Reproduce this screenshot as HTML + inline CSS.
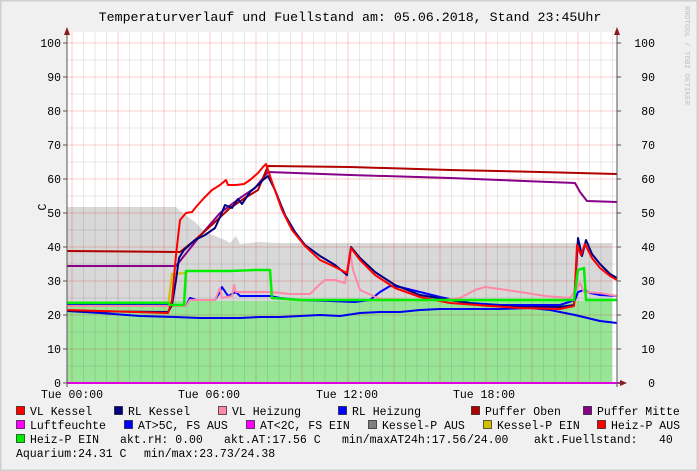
<!DOCTYPE html>
<html><head><meta charset="utf-8"><style>
html,body{margin:0;padding:0;background:#f0f0f0}
body{width:698px;height:471px;overflow:hidden;position:relative}
</style></head><body>
<svg width="698" height="471" viewBox="0 0 698 471" xmlns="http://www.w3.org/2000/svg" style="position:absolute;left:0;top:0">
<rect x="0" y="0" width="698" height="471" fill="#f0f0f0" stroke="#cfcfcf" stroke-width="3"/>
<rect x="67" y="32" width="550" height="351" fill="#ffffff"/>
<polygon fill="#d8d8d8" points="67,383 67,207 176,207 185,215 195,222 205,232 215,236 225,240 230,243 236,236 240,244 250,243 260,242 275,243 300,243 350,243 400,243 450,243 500,243 550,243 612,243 612,383"/>
<polygon fill="#98e598" points="67,383 67,301 612,301 612,383"/>
<g stroke="#000" stroke-opacity="0.09" stroke-width="1">
<path d="M83.5 32V383M95 32V383M106.5 32V383M129.5 32V383M141 32V383M152.5 32V383M175.5 32V383M187 32V383M198.5 32V383M221.5 32V383M233 32V383M244.5 32V383M267.5 32V383M279 32V383M290.5 32V383M313.5 32V383M325 32V383M336.5 32V383M359.5 32V383M371 32V383M382.5 32V383M405.5 32V383M417 32V383M428.5 32V383M451.5 32V383M463 32V383M474.5 32V383M497.5 32V383M509 32V383M520.5 32V383M543.5 32V383M555 32V383M566.5 32V383M589.5 32V383M601 32V383M612.5 32V383"/>
<path d="M67 366H617M67 332H617M67 298H617M67 264H617M67 230H617M67 196H617M67 162H617M67 128H617M67 94H617M67 60H617"/>
</g>
<g stroke="#e00000" stroke-opacity="0.2" stroke-width="1">
<path d="M72 32V383M118 32V383M164 32V383M210 32V383M256 32V383M302 32V383M348 32V383M394 32V383M440 32V383M486 32V383M532 32V383M578 32V383"/>
<path d="M67 349H617M67 315H617M67 281H617M67 247H617M67 213H617M67 179H617M67 145H617M67 111H617M67 77H617M67 43H617"/>
</g>
<g fill="none" stroke-width="2" stroke-linejoin="round">
<polyline stroke="#0000ee" points="67,311 100,313 140,316 175,317 200,318 230,318 240,318 260,317 280,317 300,316 320,315 340,316 360,313 380,312 400,312 420,310 440,309 460,309 480,309 500,309 530,308 550,310 575,315 600,321 617,323"/>
<polyline stroke="#880088" points="67,266 176,266 200,236 220,213 240,198 255,188 268,172 350,175 450,178 575,183 580,192 587,201 617,202"/>
<polyline stroke="#b00000" points="67,251 180,252 195,240 215,222 230,208 245,198 258,190 268,166 350,167 450,170 540,172 617,174"/>
<polyline stroke="#d0c000" points="67,305 168,306 170,290 172,274 186,273"/>
<polyline stroke="#0000ff" points="67,304 168,304 172,306 186,306 190,298 196,300 215,300 220,292 222,287 228,296 236,292 240,296 270,296 280,298 300,300 330,301 355,302 370,300 380,292 390,286 400,287 420,292 440,297 470,303 500,305 560,305 575,300 578,292 584,290 590,293 600,295 617,296"/>
<polyline stroke="#ff88a8" points="67,306 168,306 186,306 190,300 196,300 215,300 220,288 222,298 232,296 234,285 236,292 245,292 270,292 290,294 310,294 318,286 325,280 335,280 345,283 350,252 353,270 360,290 380,299 410,300 440,300 460,298 475,290 485,287 500,289 520,292 545,296 570,298 576,290 580,283 584,292 600,293 617,296"/>
<polyline stroke="#000080" points="67,311 168,312 172,305 176,280 179,258 184,250 195,240 205,235 215,228 220,217 225,205 232,208 238,199 242,204 250,192 258,185 263,180 268,176 275,190 285,215 295,232 305,245 320,256 335,265 347,275 351,247 360,258 375,272 395,285 420,295 450,300 480,305 520,307 560,307 574,305 578,238 582,256 586,240 592,254 600,264 610,274 617,278"/>
<polyline stroke="#ff0000" points="67,310 168,313 172,300 176,255 180,220 186,213 192,212 196,207 204,198 212,190 220,185 226,180 228,185 236,185 244,184 250,180 258,173 263,167 266,164 272,182 282,210 292,230 305,246 320,260 335,267 347,273 351,248 360,260 375,275 395,288 420,297 450,303 490,306 520,308 560,309 574,306 577,245 581,255 585,244 592,258 600,268 610,276 617,280"/>
<polyline stroke="#00ee00" stroke-width="2.5" points="67,303 168,303 170,305 184,305 186,271 230,271 255,270 270,270 272,298 300,300 400,300 500,300 574,300 578,270 584,268 586,300 617,300"/>
</g>
<path d="M67 383H623" stroke="#e000e0" stroke-width="2"/>
<path d="M67 30V387M617 30V387" stroke="#555" stroke-width="1"/>
<polygon fill="#8b1a1a" points="64,35 70,35 67,27"/>
<polygon fill="#8b1a1a" points="614,35 620,35 617,27"/>
<polygon fill="#8b1a1a" points="620,380 620,386 627,383"/>
<g stroke="#555"><path d="M63 43H67M63 77H67M63 111H67M63 145H67M63 179H67M63 213H67M63 247H67M63 281H67M63 315H67M63 349H67M63 383H67M617 43H621M617 77H621M617 111H621M617 145H621M617 179H621M617 213H621M617 247H621M617 281H621M617 315H621M617 349H621M617 383H621"/></g>
<g font-size="11.5" fill="#000" font-family="Liberation Mono, monospace">
<text x="350" y="21" text-anchor="middle" font-size="13.3">Temperaturverlauf und Fuellstand am: 05.06.2018, Stand 23:45Uhr</text>
<g text-anchor="end">
<text x="61" y="47">100</text><text x="61" y="81">90</text><text x="61" y="115">80</text><text x="61" y="149">70</text><text x="61" y="183">60</text><text x="61" y="217">50</text><text x="61" y="251">40</text><text x="61" y="285">30</text><text x="61" y="319">20</text><text x="61" y="353">10</text><text x="61" y="387">0</text>
<text x="655" y="47">100</text><text x="655" y="81">90</text><text x="655" y="115">80</text><text x="655" y="149">70</text><text x="655" y="183">60</text><text x="655" y="217">50</text><text x="655" y="251">40</text><text x="655" y="285">30</text><text x="655" y="319">20</text><text x="655" y="353">10</text><text x="655" y="387">0</text>
</g>
<g text-anchor="middle">
<text x="72" y="398">Tue 00:00</text><text x="209" y="398">Tue 06:00</text><text x="347" y="398">Tue 12:00</text><text x="484" y="398">Tue 18:00</text>
</g>
<text transform="translate(46,207) rotate(-90)" text-anchor="middle">C</text>
<text transform="translate(685,6) rotate(90)" font-size="7.5" fill="#c0c0c0">RRDTOOL / TOBI OETIKER</text>
</g>
<g stroke="#000" stroke-opacity="0.6" stroke-width="1">
<rect x="16.5" y="406.5" width="8" height="8" fill="#ff0000"/>
<rect x="114.5" y="406.5" width="8" height="8" fill="#000080"/>
<rect x="218.5" y="406.5" width="8" height="8" fill="#ff88a8"/>
<rect x="338.5" y="406.5" width="8" height="8" fill="#0000ff"/>
<rect x="471.5" y="406.5" width="8" height="8" fill="#b00000"/>
<rect x="583.5" y="406.5" width="8" height="8" fill="#880088"/>
<rect x="16.5" y="420.5" width="8" height="8" fill="#ff00ff"/>
<rect x="124.5" y="420.5" width="8" height="8" fill="#0000ff"/>
<rect x="246.5" y="420.5" width="8" height="8" fill="#ff00ff"/>
<rect x="368.5" y="420.5" width="8" height="8" fill="#808080"/>
<rect x="483.5" y="420.5" width="8" height="8" fill="#d0c000"/>
<rect x="597.5" y="420.5" width="8" height="8" fill="#ff0000"/>
<rect x="16.5" y="434.5" width="8" height="8" fill="#00ee00"/>
</g>
<g font-family="Liberation Mono, monospace" font-size="11.5" fill="#000">
<text x="30" y="415">VL Kessel</text>
<text x="128" y="415">RL Kessel</text>
<text x="232" y="415">VL Heizung</text>
<text x="352" y="415">RL Heizung</text>
<text x="485" y="415">Puffer Oben</text>
<text x="597" y="415">Puffer Mitte</text>
<text x="30" y="429">Luftfeuchte</text>
<text x="138" y="429">AT&gt;5C, FS AUS</text>
<text x="260" y="429">AT&lt;2C, FS EIN</text>
<text x="382" y="429">Kessel-P AUS</text>
<text x="497" y="429">Kessel-P EIN</text>
<text x="611" y="429">Heiz-P AUS</text>
<text x="30" y="443">Heiz-P EIN</text>
<text x="120" y="443">akt.rH: 0.00</text>
<text x="224" y="443">akt.AT:17.56 C</text>
<text x="342" y="443">min/maxAT24h:17.56</text>
<text x="467" y="443">/24.00</text>
<text x="534" y="443">akt.Fuellstand:</text>
<text x="659" y="443">40</text>
<text x="16" y="457">Aquarium:24.31 C</text>
<text x="144" y="457">min/max:23.73/24.38</text>
</g>
</svg>
</body></html>
